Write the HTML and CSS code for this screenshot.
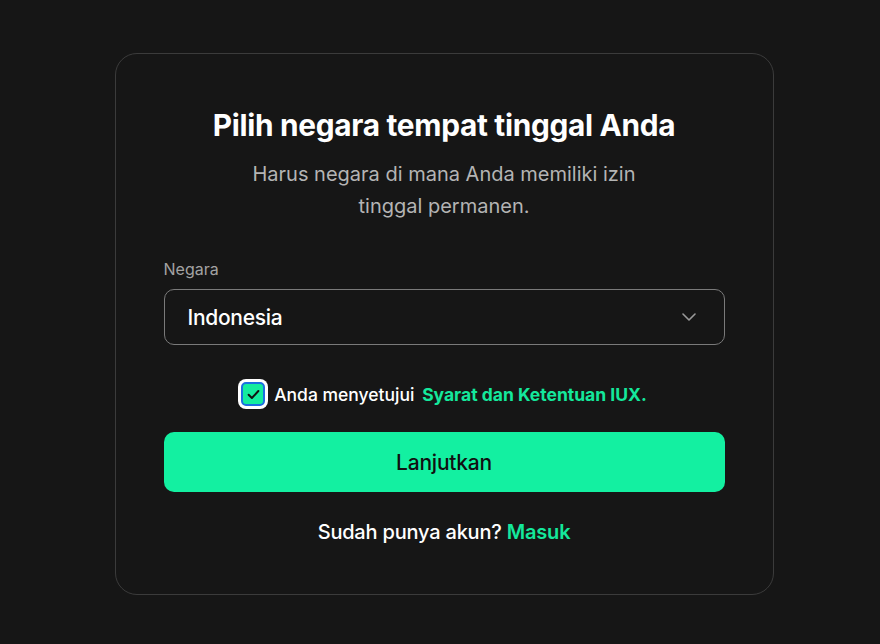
FILE: index.html
```html
<!DOCTYPE html>
<html lang="id">
<head>
<meta charset="utf-8">
<title>Pilih negara</title>
<link rel="stylesheet" href="styles.css">
</head>
<body>
<main class="page">
  <section class="card">
    <h1 class="title">Pilih negara tempat tinggal Anda</h1>
    <p class="subtitle">Harus negara di mana Anda memiliki izin tinggal permanen.</p>
    <div class="field">
      <label class="label">Negara</label>
      <div class="select">
        <span class="select-value">Indonesia</span>
        <svg class="chevron" width="14" height="8" viewBox="0 0 14 8" fill="none"><path d="M1 1l6 6 6-6" stroke="#9a9a9a" stroke-width="1.6" stroke-linecap="round" stroke-linejoin="round"/></svg>
      </div>
    </div>
    <div class="agree">
      <span class="checkbox">
        <svg width="13" height="11" viewBox="0 0 12 10" fill="none"><path d="M1.5 5.2l3 3L10.5 1.8" stroke="#111" stroke-width="1.8" stroke-linecap="round" stroke-linejoin="round"/></svg>
      </span>
      <span class="agree-text">Anda menyetujui <a class="link-bold" href="#">Syarat dan Ketentuan IUX.</a></span>
    </div>
    <button class="btn">Lanjutkan</button>
    <p class="login">Sudah punya akun? <a class="link" href="#">Masuk</a></p>
  </section>
</main>
</body>
</html>
```
FILE: styles.css
```css
* { box-sizing: border-box; }
html, body { margin: 0; padding: 0; }
body {
  background: #161616;
  font-family: "Inter", "Noto Sans", sans-serif;
  color: #fff;
  width: 880px;
  height: 644px;
  overflow: hidden;
}
.page {
  display: flex;
  justify-content: center;
  padding-top: 53px;
  padding-left: 8px;
}
.card {
  width: 659px;
  height: 542px;
  border: 1px solid #3b3b3b;
  border-radius: 22px;
  padding: 53px 48px 48px;
  display: flex;
  flex-direction: column;
  align-items: center;
}
.title {
  margin: 0;
  font-size: 29.8px;
  font-weight: 700;
  letter-spacing: -0.3px;
  line-height: 36px;
}
.subtitle {
  margin: 15px 0 0;
  width: 410px;
  text-align: center;
  font-size: 20px;
  line-height: 32px;
  color: #b4b4b4;
  letter-spacing: 0;
}
.field {
  width: 100%;
  margin-top: 37px;
  display: flex;
  flex-direction: column;
}
.label {
  font-size: 16px;
  color: #a3a3a3;
  line-height: 20px;
  margin-bottom: 10px;
}
.select {
  height: 56px;
  border: 1.5px solid #7a7a7a;
  border-radius: 10px;
  display: flex;
  align-items: center;
  justify-content: space-between;
  padding: 0 28px 0 23px;
}
.select-value {
  font-size: 21px;
  font-weight: 500;
  letter-spacing: -0.3px;
}
.agree {
  margin-top: 37px;
  display: flex;
  align-items: center;
  gap: 9px;
}
.checkbox {
  width: 24px;
  height: 24px;
  border-radius: 5px;
  background: #14ec9e;
  border: 2px solid #1b6fe0;
  box-shadow: 0 0 0 3px #fff;
  display: flex;
  align-items: center;
  justify-content: center;
}
.agree-text {
  font-size: 17.5px;
  font-weight: 500;
  letter-spacing: 0;
}
.link-bold {
  color: #14e89c;
  font-weight: 700;
  text-decoration: none;
  margin-left: 3px;
}
.btn {
  margin-top: 26px;
  width: 100%;
  height: 60px;
  flex-shrink: 0;
  border: none;
  border-radius: 10px;
  background: #13f0a1;
  color: #111;
  font-family: inherit;
  font-size: 21px;
  font-weight: 500;
  letter-spacing: -0.2px;
}
.login {
  margin: 28px 0 0;
  font-size: 20px;
  font-weight: 500;
  letter-spacing: -0.2px;
}
.link {
  color: #14e89c;
  font-weight: 600;
  text-decoration: none;
}
```
